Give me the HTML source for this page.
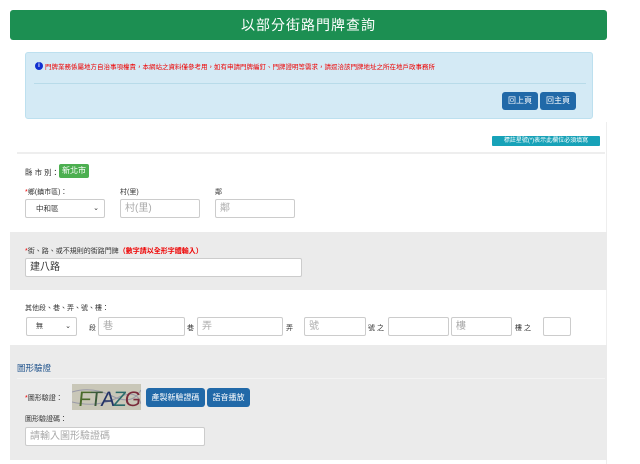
<!DOCTYPE html>
<html><head><meta charset="utf-8"><style>
*{box-sizing:border-box;margin:0;padding:0}
body{width:640px;height:464px;background:#fff;font-family:"Liberation Sans","Noto Sans CJK TC",sans-serif;position:relative;overflow:hidden;color:#333}
.a{position:absolute}
.hdr{left:10px;top:10px;width:597px;height:30px;background:#1c8f52;border-radius:3px;color:#fff;font-size:14px;text-align:center;line-height:30px;letter-spacing:1px}
.info{left:25px;top:52px;width:568px;height:67px;background:#d4eaf5;border:1px solid #bde0ef;border-radius:3px}
.panel{left:10px;top:122px;width:597px;height:342px;background:#fff;border-right:1px solid #eee}
.btn{background:#2169a8;color:#fff;font-size:8px;text-align:center;border-radius:3px}
.inp{background:#fff;border:1px solid #ccc;border-radius:2px;font-size:10px;color:#aaa;padding-left:4px}
.lbl{font-size:7px;color:#333}
.gray{background:#ebebeb}
.red{color:#e00}
</style></head><body>
<div class="a hdr">以部分街路門牌查詢</div>
<div class="a info">
 <div class="a" style="left:9px;top:9px;width:8px;height:8px;border-radius:50%;background:#1030d0;color:#fff;font-size:6px;text-align:center;line-height:8px;font-weight:bold">i</div>
 <div class="a red" style="left:19px;top:8px;font-size:6.5px;white-space:nowrap">門牌業務係屬地方自治事項權責，本網站之資料僅參考用，如有申請門牌編釘、門牌證明等需求，請逕洽該門牌地址之所在地戶政事務所</div>
 <div class="a" style="left:8px;top:30px;width:552px;height:1px;background:#b8dbe9"></div>
</div>
<div class="a btn" style="left:502px;top:92px;width:36px;height:18px;line-height:18px">回上頁</div>
<div class="a btn" style="left:540px;top:92px;width:36px;height:18px;line-height:18px">回主頁</div>
<div class="a panel"></div>
<div class="a" style="left:492px;top:136px;width:108px;height:10px;background:#17a2b8;color:#fff;font-size:6px;line-height:10px;text-align:center;border-radius:1px;white-space:nowrap;overflow:hidden">標註星號(*)表示此欄位必須填寫</div>
<div class="a" style="left:17px;top:152px;width:588px;height:2px;background:#eee"></div>
<div class="a lbl" style="left:25px;top:167px;font-size:7.5px">縣 市 別：</div>
<div class="a" style="left:59px;top:164px;width:30px;height:14px;background:#4caf50;color:#fff;font-size:8px;line-height:14px;text-align:center;border-radius:2px">新北市</div>
<div class="a lbl" style="left:25px;top:187px"><span class="red">*</span>鄉(鎮市區)：</div>
<div class="a lbl" style="left:120px;top:187px">村(里)</div>
<div class="a lbl" style="left:215px;top:187px">鄰</div>
<div class="a inp" style="left:25px;top:199px;width:80px;height:19px;color:#333;font-size:7.5px;line-height:17px;padding-left:10px">中和區<span style="position:absolute;right:5px;font-size:7px">⌄</span></div>
<div class="a inp" style="left:120px;top:199px;width:80px;height:19px;line-height:17px">村(里)</div>
<div class="a inp" style="left:215px;top:199px;width:80px;height:19px;line-height:17px">鄰</div>
<div class="a gray" style="left:10px;top:232px;width:597px;height:58px"></div>
<div class="a lbl" style="left:25px;top:246px"><span class="red">*</span>街、路、或不規則的街路門牌<span class="red" style="font-weight:bold">（數字請以全形字體輸入）</span></div>
<div class="a inp" style="left:25px;top:258px;width:277px;height:19px;line-height:17px;color:#333">建八路</div>
<div class="a lbl" style="left:25px;top:303px">其他段、巷、弄、號、樓：</div>
<div class="a inp" style="left:26px;top:317px;width:51px;height:19px;color:#333;font-size:7px;line-height:17px;padding-left:9px">無<span style="position:absolute;right:5px">⌄</span></div>
<div class="a lbl" style="left:89px;top:323px">段</div>
<div class="a inp" style="left:98px;top:317px;width:87px;height:19px;line-height:17px">巷</div>
<div class="a lbl" style="left:187px;top:323px">巷</div>
<div class="a inp" style="left:197px;top:317px;width:86px;height:19px;line-height:17px">弄</div>
<div class="a lbl" style="left:286px;top:323px">弄</div>
<div class="a inp" style="left:304px;top:317px;width:62px;height:19px;line-height:17px">號</div>
<div class="a lbl" style="left:368px;top:323px">號 之</div>
<div class="a inp" style="left:388px;top:317px;width:61px;height:19px"></div>
<div class="a inp" style="left:451px;top:317px;width:61px;height:19px;line-height:17px">樓</div>
<div class="a lbl" style="left:515px;top:323px">樓 之</div>
<div class="a inp" style="left:543px;top:317px;width:28px;height:19px"></div>
<div class="a gray" style="left:10px;top:345px;width:597px;height:115px"></div>
<div class="a" style="left:17px;top:362px;font-size:8.5px;color:#1a4f8a">圖形驗證</div>
<div class="a" style="left:17px;top:378px;width:588px;height:1px;background:#f3f3f3"></div>
<div class="a lbl" style="left:25px;top:393px"><span class="red">*</span>圖形驗證：</div>
<svg class="a" style="left:72px;top:384px" width="69" height="26"><rect width="69" height="26" fill="#c9c7b8"/><path d="M0 8 Q20 2 40 12 T69 6 M0 18 Q25 24 45 14 T69 20" stroke="#9a9aa8" fill="none" stroke-width="1"/><text x="6" y="22" font-size="21" font-family="Liberation Sans" fill="#4a6a2a" letter-spacing="-1.5" transform="skewX(-6) translate(2,0)">F<tspan fill="#3a5a3a">T</tspan><tspan fill="#223366">A</tspan><tspan fill="#2a6a6a">Z</tspan><tspan fill="#7a2a3a">G</tspan></text></svg>
<div class="a btn" style="left:146px;top:388px;width:59px;height:19px;line-height:19px">產製新驗證碼</div>
<div class="a btn" style="left:207px;top:388px;width:43px;height:19px;line-height:19px">語音播放</div>
<div class="a lbl" style="left:25px;top:414px">圖形驗證碼：</div>
<div class="a inp" style="left:25px;top:427px;width:180px;height:19px;line-height:17px">請輸入圖形驗證碼</div>
</body></html>
